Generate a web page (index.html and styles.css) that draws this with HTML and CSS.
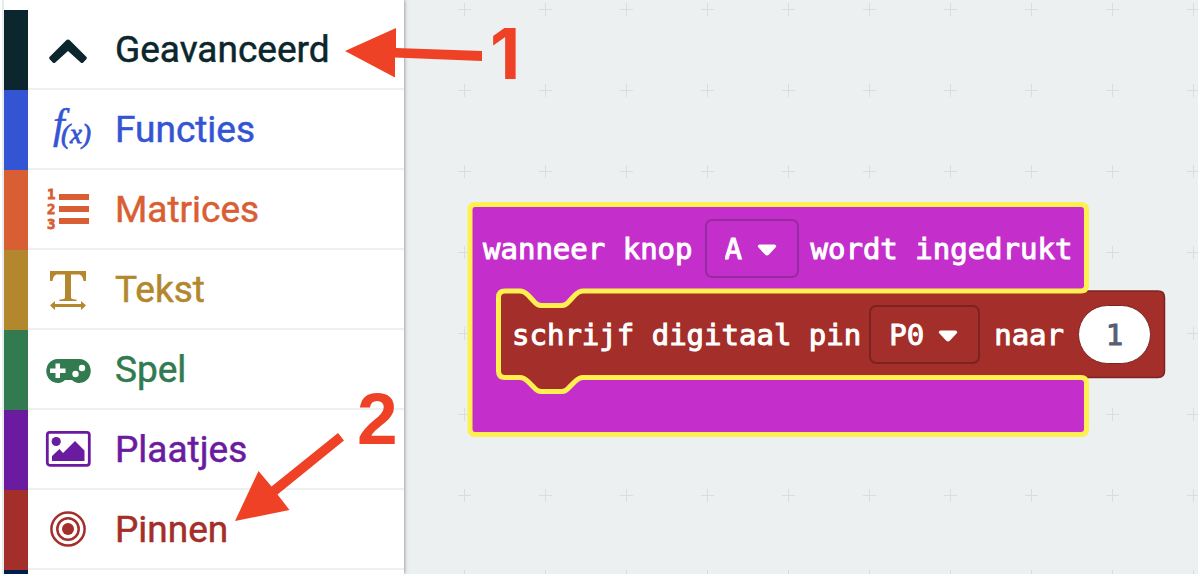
FILE: index.html
```html
<!DOCTYPE html>
<html lang="nl">
<head>
<meta charset="utf-8">
<title>Blokken</title>
<link rel="stylesheet" href="styles.css">
</head>
<body>
<div class="editor">
  <nav class="toolbox" aria-label="Categorieën">
    <button type="button" class="category advanced">
      <svg class="icon" viewBox="0 0 48 48" aria-hidden="true"><path d="M24 14.500q1 0 2 1L42.500 32q.8 1 0 2l-3.500 3.700q-1 .8-2 0L24 26 11 37.700q-1 .8-2 0L5.500 34q-.8-1 0-2L22 15.500q1-1 2-1z" fill="currentColor"/></svg>
      <span class="label">Geavanceerd</span>
    </button>
    <button type="button" class="category functions">
      <svg class="icon" viewBox="0 0 48 48" aria-hidden="true"><text class="glyph-f" x="9" y="33">f</text><text class="glyph-x" x="17" y="38">(x)</text></svg>
      <span class="label">Functies</span>
    </button>
    <button type="button" class="category arrays">
      <svg class="icon" viewBox="0 0 48 48" aria-hidden="true"><g class="glyph-num"><text x="3" y="14">1</text><text x="3" y="29">2</text><text x="3" y="44">3</text></g><path d="M15 9h30v6H15zM15 21h30v6H15zM15 33h30v6H15z" fill="currentColor"/></svg>
      <span class="label">Matrices</span>
    </button>
    <button type="button" class="category text">
      <svg class="icon" viewBox="0 0 48 48" aria-hidden="true"><path d="M6 6h36v10h-2.500c-.5-4-2-6.500-5-6.500h-7.500v23c0 1.500 2 2 5.500 2V36h-17v-1.500c3.500 0 5.500-.5 5.500-2v-23h-7.500c-3 0-4.500 2.500-5 6.500H6z" fill="currentColor"/><path d="M6 40.500 11 36v3h26v-3l5 4.500-5 4.500v-3H11v3z" fill="currentColor"/></svg>
      <span class="label">Tekst</span>
    </button>
    <button type="button" class="category game">
      <svg class="icon" viewBox="0 0 48 48" aria-hidden="true"><path d="M14 14h21a11.300 12 0 1 1-7 21h-7A11.300 12 0 1 1 14 14z" fill="currentColor"/><path d="M11.500 18.500h4.500v5h5.500v4.500H16v5h-4.500v-5H6v-4.500h5.500z" fill="#fff"/><circle cx="31.500" cy="29" r="3.200" fill="#fff"/><circle cx="38" cy="23" r="3.200" fill="#fff"/></svg>
      <span class="label">Spel</span>
    </button>
    <button type="button" class="category images">
      <svg class="icon" viewBox="0 0 48 48" aria-hidden="true"><rect x="3.300" y="7.300" width="42" height="33" rx="2.500" fill="none" stroke="currentColor" stroke-width="2.800"/><circle cx="12.200" cy="16.500" r="4.600" fill="currentColor"/><path d="M8 36v-5l7.500-7 3.500 4 12-12 9.500 9.500V36z" fill="currentColor"/></svg>
      <span class="label">Plaatjes</span>
    </button>
    <button type="button" class="category pins">
      <svg class="icon" viewBox="0 0 48 48" aria-hidden="true"><g fill="none" stroke="currentColor" stroke-width="2.500"><circle cx="24" cy="24" r="16.600"/><circle cx="24" cy="24" r="10.700"/></g><circle cx="24" cy="24" r="6" fill="currentColor"/></svg>
      <span class="label">Pinnen</span>
    </button>
    <div class="category next"></div>
  </nav>

  <main class="workspace">
    <svg class="grid" aria-hidden="true">
      <defs><pattern id="cross" width="81" height="81" patternUnits="userSpaceOnUse" x="20" y="-31"><path d="M40.500 34v13M34 40.500h13" stroke="#d9dddf" stroke-width="1"/></pattern></defs>
      <rect width="100%" height="100%" fill="url(#cross)"/>
    </svg>

    <div class="block">
      <svg class="shape" viewBox="467 202 700 236" aria-hidden="true">
        <path id="event" d="M475 204.500H1081q5.500 0 5.500 5.500V285.500q0 5.500-5.500 5.500H583c-4 0-6 2-8 4l-6 6.500c-2 2.500-4 4-7 4H541c-3 0-5-1.500-7-4l-6-6.500c-2-2-4-4-8-4H505q-6.500 0-6.500 6.500V371q0 6.500 6.500 6.500H520c4 0 6 2 8 4l6 6c2 2.500 4 4 7 4H562c3 0 5-1.500 7-4l6-6c2-2 4-4 8-4H1081q5.500 0 5.500 5.500V429q0 5.500-5.500 5.500H475q-5 0-5-5.500V210q0-5.500 5-5.500z" fill="#c42fcc"/>
        <path d="M1158 291H583c-4 0-6 2-8 4l-6 6.500c-2 2.500-4 4-7 4H541c-3 0-5-1.500-7-4l-6-6.500c-2-2-4-4-8-4H505q-6.500 0-6.500 6.500V371q0 6.500 6.500 6.500H520c4 0 6 2 8 4l6 6c2 2.500 4 4 7 4H562c3 0 5-1.500 7-4l6-6c2-2 4-4 8-4H1158q6.500 0 6.500-6.500V297.500q0-6.500-6.500-6.500z" fill="#a32e2a" stroke="#7c2320" stroke-width="1.500"/>
        <use href="#event" class="outline"/>
      </svg>
      <div class="row event-row">
        <label for="button-name">wanneer knop</label>
        <span class="field event-field">
          <select id="button-name"><option>A</option><option>B</option><option>A+B</option></select>
          <svg class="caret" viewBox="0 0 20 12" aria-hidden="true"><path d="M2.500.5h15q3 1 1 3L12 10.500q-2 2-4 0L1.500 3.500q-2-2 1-3z" fill="#fff"/></svg>
        </span>
        <span>wordt ingedrukt</span>
      </div>
      <div class="row pin-row">
        <label for="pin-name">schrijf digitaal pin</label>
        <span class="field pin-field">
          <select id="pin-name"><option>P0</option><option>P1</option><option>P2</option></select>
          <svg class="caret" viewBox="0 0 20 12" aria-hidden="true"><path d="M2.500.5h15q3 1 1 3L12 10.500q-2 2-4 0L1.500 3.500q-2-2 1-3z" fill="#fff"/></svg>
        </span>
        <label for="pin-value">naar</label>
        <input id="pin-value" class="value" type="text" value="1">
      </div>
    </div>
  </main>

  <svg class="notes" viewBox="0 0 520 574" aria-hidden="true">
    <path d="M345 51 396 28v20l86 3v10l-87-3.500v20z"/>
    <path d="M235 521 258.500 471l13 15.500L338 433l6 7.500-66.500 54L289.500 510z"/>
    <text class="note-one" x="490" y="79">1</text>
    <text class="note-two" x="357" y="444">2</text>
  </svg>
</div>
</body>
</html>
```

FILE: styles.css
```css
* {
  box-sizing: border-box;
}

body {
  margin: 0;
  background: #ecf0f1;
}

.editor {
  position: relative;
  display: flex;
  height: 100vh;
  overflow: hidden;
}

.toolbox {
  position: relative;
  z-index: 1;
  flex: none;
  display: flex;
  flex-direction: column;
  width: 404px;
  padding: 10px 0 0 2px;
  background: linear-gradient(to right, #fff 2px, #e8eced 2px, #e8eced 4px, #fff 4px);
  box-shadow: 0 0 4px rgba(0, 0, 0, 0.5);
}

.category {
  flex: none;
  display: flex;
  align-items: center;
  gap: 23px;
  height: 80px;
  margin: 0 0 0 2px;
  padding: 0 0 2px 16px;
  border: 0;
  border-left: 24px solid;
  background: linear-gradient(to top, #ecf0f1 2px, #fff 2px);
  font-family: Roboto, "Liberation Sans", sans-serif;
  font-size: 37px;
  line-height: 48px;
  text-align: left;
}

.label {
  padding-top: 2px;
  -webkit-text-stroke: 0.5px currentColor;
}

.icon {
  flex: none;
  width: 48px;
  height: 48px;
  overflow: visible;
}

.icon text {
  fill: currentColor;
}

.glyph-f {
  font: italic 42px "Liberation Serif", serif;
  stroke: currentColor;
  stroke-width: 0.5px;
}

.glyph-x {
  font: italic 27px "Liberation Serif", serif;
  stroke: currentColor;
  stroke-width: 0.8px;
}

.glyph-num {
  font: bold 14px "DejaVu Sans Mono", monospace;
  stroke: currentColor;
  stroke-width: 0.8px;
}

.advanced { color: #0b262c; }
.functions { color: #3455d3; }
.arrays { color: #d85f34; }
.text { color: #b2872e; }
.game { color: #327a50; }
.images { color: #6a1b9f; }
.pins { color: #a32e2a; }
.next { color: #001e4c; }

.workspace {
  position: relative;
  flex: 1;
  background: #ecf0f1;
}

.grid {
  position: absolute;
  inset: 0;
  width: 100%;
  height: 100%;
}

.block {
  position: absolute;
  left: 63px;
  top: 202px;
  width: 700px;
  color: #fff;
  font-family: "DejaVu Sans Mono", monospace;
  font-size: 29px;
  line-height: 36px;
  -webkit-text-stroke: 1px currentColor;
}

.shape {
  position: absolute;
  left: 0;
  top: 0;
  width: 700px;
  height: 236px;
}

.outline {
  fill: none;
  stroke: #fff04f;
  stroke-width: 5px;
}

.row {
  position: relative;
  display: flex;
  align-items: center;
  white-space: nowrap;
}

.event-row {
  gap: 12px;
  padding: 17px 0 0 16px;
}

.pin-row {
  gap: 8px;
  padding: 27px 0 0 45px;
}

.field {
  position: relative;
  display: flex;
}

.field select {
  appearance: none;
  width: 94px;
  height: 59px;
  padding: 0 0 0 18px;
  border: 2px solid #962a9e;
  border-radius: 7px;
  background: transparent;
  color: inherit;
  font: inherit;
  -webkit-text-stroke: inherit;
}

.pin-field {
  margin-right: 6px;
}

.pin-field select {
  width: 111px;
  border-color: #7c2320;
}

.caret {
  position: absolute;
  right: 22px;
  top: 25px;
  width: 20px;
  height: 12px;
  pointer-events: none;
}

.value {
  width: 73px;
  height: 59px;
  margin-left: 6px;
  padding: 0;
  border: 1px solid #7c2320;
  border-radius: 30px;
  background: #fff;
  color: #575e75;
  font: inherit;
  text-align: center;
}

.notes {
  position: absolute;
  z-index: 2;
  left: 0;
  top: 0;
  width: 520px;
  height: 574px;
  fill: #ee4126;
  pointer-events: none;
}

.note-one {
  font: bold 70px Inter, sans-serif;
}

.note-two {
  font: bold 73px "Liberation Sans", sans-serif;
}
```
